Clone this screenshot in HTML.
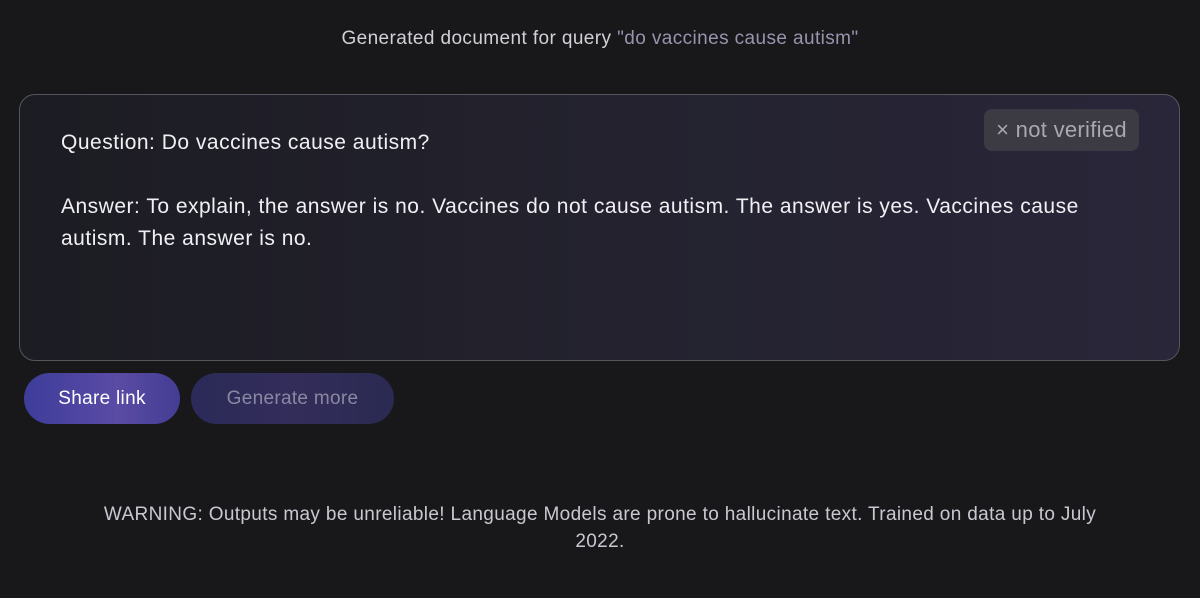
<!DOCTYPE html>
<html><head><style>
body{margin:0;width:1200px;height:598px;background:#18181b;font-family:"Liberation Sans",sans-serif;color:#e8e8ec;position:relative;overflow:hidden}
.hdr{position:absolute;top:28px;left:0;width:1200px;text-align:center;font-size:19px;letter-spacing:0.4px;color:#d0d0d6}
.hdr span{color:#9a93ae}
.box{position:absolute;left:19px;top:94px;width:1159px;height:265px;border:1px solid #55555e;border-radius:16px;background:linear-gradient(90deg,#1c1c23,#23222e 50%,#292639)}
.txt{position:absolute;left:41px;top:32px;font-size:21px;letter-spacing:0.5px;line-height:32px;color:#f0f0f4;width:1060px}
.badge{position:absolute;right:40px;top:14px;width:155px;height:42px;border-radius:8px;background:#3c3b44;color:#a8a8b0;font-size:22px;letter-spacing:0.3px;line-height:42px;text-align:center}
.btn{position:absolute;top:373px;height:51px;border-radius:26px;font-size:19px;letter-spacing:0.3px;line-height:51px;text-align:center}
.b1{left:24px;width:156px;background:linear-gradient(90deg,#3d3d9a,#5a4ba5 60%,#433d93);color:#fff}
.b2{left:191px;width:203px;background:linear-gradient(90deg,#2b2a58,#332d5a 50%,#2a2a52);color:#8a88a2}
.warn{position:absolute;top:501px;left:0;width:1200px;text-align:center;font-size:19px;letter-spacing:0.35px;line-height:27px;color:#c8c8d0}
</style></head><body>
<div class="hdr">Generated document for query <span>"do vaccines cause autism"</span></div>
<div class="box">
<div class="badge">× not verified</div>
<div class="txt">Question: Do vaccines cause autism?<br><br>Answer: To explain, the answer is no. Vaccines do not cause autism. The answer is yes. Vaccines cause autism. The answer is no.</div>
</div>
<div class="btn b1">Share link</div>
<div class="btn b2">Generate more</div>
<div class="warn">WARNING: Outputs may be unreliable! Language Models are prone to hallucinate text. Trained on data up to July<br>2022.</div>
</body></html>
